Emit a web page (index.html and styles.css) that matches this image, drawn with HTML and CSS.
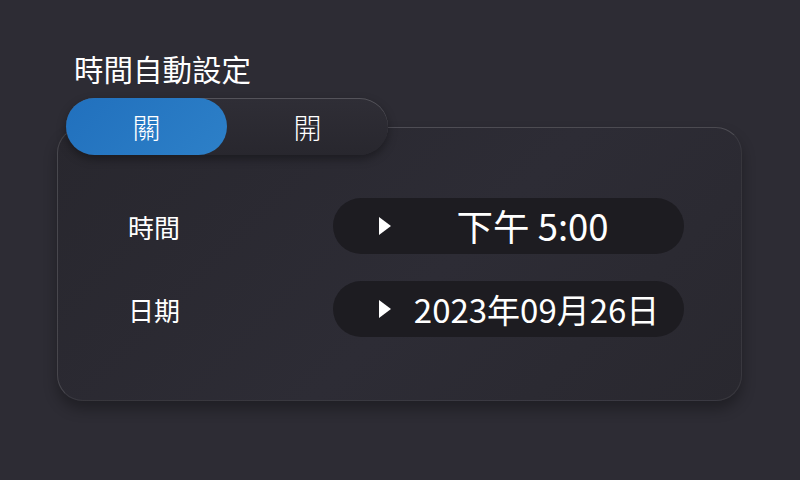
FILE: index.html
```html
<!DOCTYPE html>
<html lang="zh-TW">
<head>
    <meta charset="UTF-8">
    <title>時間自動設定</title>
    <link rel="stylesheet" href="styles.css">
</head>
<body>
    <h2 class="title">時間自動設定</h2>

    <div class="toggle">
        <div class="toggle-option active">關</div>
        <div class="toggle-option">開</div>
    </div>

    <div class="card">
        <div class="row">
            <div class="row-label">時間</div>
            <div class="pill">
                <span class="arrow"></span>
                <span class="pill-value time">下午 5:00</span>
            </div>
        </div>
        <div class="row">
            <div class="row-label">日期</div>
            <div class="pill">
                <span class="arrow"></span>
                <span class="pill-value">2023年09月26日</span>
            </div>
        </div>
    </div>
</body>
</html>
```

FILE: styles.css
```css
:root {
    --bg-color: #2d2c34;
    --card-color: #29282f;
    --pill-color: #1d1c21;
    --blue-color: #2577c2;
    --text-color: #ffffff;
}

html, body {
    height: 100%;
}

body {
    margin: 0;
    padding: 47px 0 0 57px;
    box-sizing: border-box;
    background: var(--bg-color);
    color: var(--text-color);
    font-family: "Noto Sans CJK TC", "Noto Sans", sans-serif;
}

.title {
    margin: 0 0 9px 17px;
    font-size: 29.5px;
    font-weight: 400;
    line-height: 42px;
}

.toggle {
    position: relative;
    z-index: 2;
    display: flex;
    width: 322px;
    height: 57px;
    margin: 0 0 -28px 9px;
    border-radius: 29px;
    background: linear-gradient(180deg, #2f2e36 0%, #28272e 100%);
    box-shadow: inset 0 1px 0 rgba(255,255,255,0.18), 0 4px 10px rgba(0,0,0,0.35);
}

.toggle-option {
    flex: 1;
    display: flex;
    align-items: center;
    justify-content: center;
    font-size: 28px;
    font-weight: 300;
    border-radius: 29px;
}

.toggle-option.active {
    background: linear-gradient(135deg, #2170bd 0%, #2d80c8 100%);
}

.card {
    width: 685px;
    height: 274px;
    box-sizing: border-box;
    padding: 70px 57px 0 70px;
    border-radius: 26px;
    border: 1px solid rgba(255,255,255,0.07);
    border-top-color: rgba(255,255,255,0.16);
    border-left-color: rgba(255,255,255,0.14);
    background: linear-gradient(135deg, #28272e 0%, #2d2c35 55%, #29282f 100%);
    box-shadow: 0 8px 14px rgba(0,0,0,0.3);
}

.row {
    display: flex;
    align-items: center;
    margin-bottom: 27px;
}

.row-label {
    width: 206px;
    font-size: 26px;
}

.pill {
    display: flex;
    align-items: center;
    width: 352px;
    height: 56px;
    box-sizing: border-box;
    padding: 0 2px 0 46px;
    border-radius: 28px;
    background: var(--pill-color);
}

.arrow {
    width: 0;
    height: 0;
    border-top: 9px solid transparent;
    border-bottom: 9px solid transparent;
    border-left: 12px solid var(--text-color);
}

.pill-value {
    flex: 1;
    text-align: center;
    font-size: 33px;
    line-height: 56px;
}

.pill-value.time {
    padding-right: 8px;
    font-size: 36.5px;
}
```
